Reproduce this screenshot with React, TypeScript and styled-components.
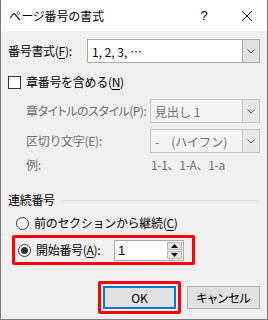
import React from "react";
import styled, { createGlobalStyle } from "styled-components";

const Global = createGlobalStyle`
  html, body { margin: 0; padding: 0; background: #ffffff; }
  body {
    font-family: "Noto Sans CJK JP", "Noto Sans", sans-serif;
    font-size: 12px;
    color: #000;
  }
`;

const Window = styled.div`
  width: 268px;
  height: 320px;
  box-sizing: border-box;
  border: 1px solid #7a7a7a;
  border-top: none;
  display: flex;
  flex-direction: column;
  background: #f0f0f0;
  overflow: hidden;
`;

const TitleBar = styled.div`
  height: 31px;
  background: #ffffff;
  display: flex;
  align-items: center;
  padding-left: 8px;
  flex-shrink: 0;
`;

const Title = styled.div`
  flex: 1;
  font-size: 12px;
  line-height: 16px;
  font-feature-settings: "palt" 1;
`;

const TitleButton = styled.div<{ $w: number }>`
  width: ${(p) => p.$w}px;
  height: 31px;
  display: flex;
  align-items: center;
  justify-content: center;
  font-family: "Liberation Sans", sans-serif;
  font-size: 13px;
`;

const Body = styled.div`
  flex: 1;
  display: flex;
  flex-direction: column;
  padding: 8px 7px 0 7px;
`;

const Row = styled.div<{ $h: number; $mt?: number; $pl?: number }>`
  display: flex;
  align-items: center;
  height: ${(p) => p.$h}px;
  margin-top: ${(p) => p.$mt ?? 0}px;
  padding-left: ${(p) => p.$pl ?? 0}px;
`;

const Label = styled.div<{ $w?: number; $disabled?: boolean; $tight?: boolean }>`
  width: ${(p) => (p.$w ? `${p.$w}px` : "auto")};
  flex-shrink: 0;
  white-space: nowrap;
  color: ${(p) => (p.$disabled ? "#6d6d6d" : "#000")};
  line-height: 16px;
  letter-spacing: ${(p) => (p.$tight ? "-0.5px" : "-0.3px")};
  font-feature-settings: ${(p) => (p.$tight ? '"palt" 1' : "normal")};
`;

const U = styled.span`
  text-decoration: underline;
  text-underline-offset: 2px;
`;

const Combo = styled.div<{ $w: number; $disabled?: boolean }>`
  width: ${(p) => p.$w}px;
  height: 24px;
  box-sizing: border-box;
  border: 1px solid ${(p) => (p.$disabled ? "#c4c4c4" : "#a9a9a9")};
  background: ${(p) => (p.$disabled ? "#f4f4f4" : "#ffffff")};
  display: flex;
  align-items: stretch;
`;

const ComboText = styled.div<{ $disabled?: boolean }>`
  flex: 1;
  display: flex;
  align-items: center;
  padding-left: 4px;
  color: ${(p) => (p.$disabled ? "#6d6d6d" : "#000")};
  white-space: nowrap;
  font-size: 12px;
`;

const DropButton = styled.div<{ $disabled?: boolean }>`
  width: 16px;
  background: ${(p) => (p.$disabled ? "#e8e8e8" : "#e1e1e1")};
  border-left: 1px solid ${(p) => (p.$disabled ? "#c4c4c4" : "#a9a9a9")};
  display: flex;
  align-items: center;
  justify-content: center;
`;

const Chevron = ({ color }: { color: string }) => (
  <svg width="8" height="5" viewBox="0 0 8 5">
    <path d="M0.5 0.5 L4 4 L7.5 0.5" fill="none" stroke={color} strokeWidth="1" />
  </svg>
);

const CheckBox = styled.div`
  width: 13px;
  height: 13px;
  box-sizing: border-box;
  border: 1px solid #333333;
  background: #ffffff;
  margin-right: 5px;
  flex-shrink: 0;
`;

const GroupHeader = styled.div`
  display: flex;
  align-items: center;
  height: 18px;
  margin-top: 18px;
  gap: 6px;
`;

const Separator = styled.div`
  flex: 1;
  height: 1px;
  background: #dcdcdc;
  margin-right: 1px;
`;

const Radio = styled.div<{ $checked?: boolean }>`
  width: 13px;
  height: 13px;
  box-sizing: border-box;
  border-radius: 50%;
  border: 1px solid #333333;
  background: #ffffff;
  margin-right: 5px;
  flex-shrink: 0;
  display: flex;
  align-items: center;
  justify-content: center;
  &::after {
    content: "";
    display: ${(p) => (p.$checked ? "block" : "none")};
    width: 7px;
    height: 7px;
    border-radius: 50%;
    background: #333333;
  }
`;

const Highlight = styled.div<{ $w: number; $h: number; $center?: boolean }>`
  width: ${(p) => p.$w}px;
  height: ${(p) => p.$h}px;
  box-sizing: border-box;
  border: 3px solid #ff0000;
  border-radius: 2px;
  display: flex;
  align-items: center;
  justify-content: ${(p) => (p.$center ? "center" : "flex-start")};
  flex-shrink: 0;
`;

const Spin = styled.div`
  width: 70px;
  height: 21px;
  box-sizing: border-box;
  border: 1px solid #a9a9a9;
  background: #ffffff;
  display: flex;
  margin-left: 16px;
`;

const SpinText = styled.div`
  flex: 1;
  display: flex;
  align-items: center;
  padding-left: 3px;
  font-family: "Liberation Sans", sans-serif;
  font-size: 13px;
`;

const SpinButtons = styled.div`
  width: 15px;
  display: flex;
  flex-direction: column;
  gap: 1px;
  padding: 1px 1px 1px 0;
`;

const SpinBtn = styled.div`
  flex: 1;
  background: #e5e5e5;
  border: 1px solid #b5b5b5;
  display: flex;
  align-items: center;
  justify-content: center;
`;

const Buttons = styled.div`
  display: flex;
  justify-content: flex-end;
  align-items: center;
  margin-top: auto;
  margin-bottom: 5px;
  gap: 6px;
`;

const Button = styled.div<{ $primary?: boolean }>`
  width: 73px;
  height: 23px;
  box-sizing: border-box;
  background: #e1e1e1;
  border: ${(p) => (p.$primary ? "2px solid #0078d7" : "1px solid #adadad")};
  display: flex;
  align-items: center;
  justify-content: center;
  font-size: 12px;
  flex-shrink: 0;
  font-feature-settings: "palt" 1;
`;

export default function App() {
  return (
    <>
      <Global />
      <Window>
        <TitleBar>
          <Title>ページ番号の書式</Title>
          <TitleButton $w={46}>?</TitleButton>
          <TitleButton $w={40}>
            <svg width="12" height="12" viewBox="0 0 12 12">
              <path d="M1 1 L11 11 M11 1 L1 11" stroke="#000" strokeWidth="1" />
            </svg>
          </TitleButton>
        </TitleBar>
        <Body>
          <Row $h={24}>
            <Label $w={79}>
              番号書式(<U>F</U>):
            </Label>
            <Combo $w={174}>
              <ComboText>1, 2, 3, …</ComboText>
              <DropButton>
                <Chevron color="#444" />
              </DropButton>
            </Combo>
          </Row>
          <Row $h={20} $mt={9}>
            <CheckBox />
            <Label>
              章番号を含める(<U>N</U>)
            </Label>
          </Row>
          <Row $h={24} $mt={7} $pl={18}>
            <Label $w={124} $disabled $tight>
              章タイトルのスタイル(P):
            </Label>
            <Combo $w={111} $disabled>
              <ComboText $disabled>見出し 1</ComboText>
              <DropButton $disabled>
                <Chevron color="#555" />
              </DropButton>
            </Combo>
          </Row>
          <Row $h={24} $mt={6} $pl={18}>
            <Label $w={124} $disabled>
              区切り文字(E):
            </Label>
            <Combo $w={111} $disabled>
              <ComboText $disabled>-　(ハイフン)</ComboText>
              <DropButton $disabled>
                <Chevron color="#555" />
              </DropButton>
            </Combo>
          </Row>
          <Row $h={16} $mt={4} $pl={18}>
            <Label $w={125} $disabled>
              例:
            </Label>
            <Label $disabled>1-1、1-A、1-a</Label>
          </Row>
          <GroupHeader>
            <Label>連続番号</Label>
            <Separator />
          </GroupHeader>
          <Row $h={18} $mt={5} $pl={8}>
            <Radio />
            <Label>
              前のセクションから継続(<U>C</U>)
            </Label>
          </Row>
          <Row $h={30} $mt={3} $pl={4}>
            <Highlight $w={183} $h={30}>
              <Row $h={24} $pl={3}>
                <Radio $checked />
                <Label $w={62}>
                  開始番号(<U>A</U>):
                </Label>
                <Spin>
                  <SpinText>1</SpinText>
                  <SpinButtons>
                    <SpinBtn>
                      <svg width="7" height="4" viewBox="0 0 7 4">
                        <path d="M0 4 L3.5 0 L7 4 Z" fill="#000" />
                      </svg>
                    </SpinBtn>
                    <SpinBtn>
                      <svg width="7" height="4" viewBox="0 0 7 4">
                        <path d="M0 0 L3.5 4 L7 0 Z" fill="#000" />
                      </svg>
                    </SpinBtn>
                  </SpinButtons>
                </Spin>
              </Row>
            </Highlight>
          </Row>
          <Buttons>
            <Highlight $w={83} $h={33} $center>
              <Button $primary>OK</Button>
            </Highlight>
            <Button>キャンセル</Button>
          </Buttons>
        </Body>
      </Window>
    </>
  );
}
